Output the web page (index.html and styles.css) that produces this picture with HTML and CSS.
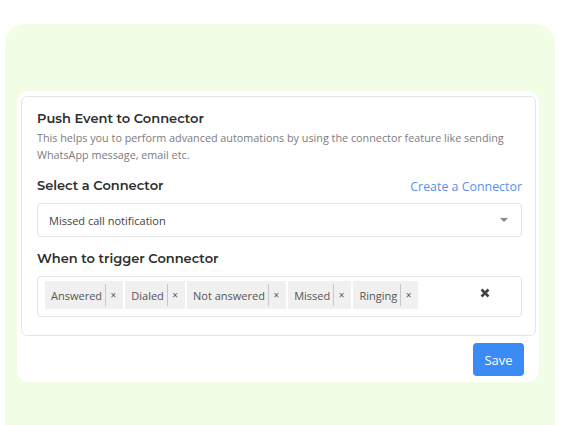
FILE: index.html
```html
<!DOCTYPE html>
<html>
<head>
<meta charset="utf-8">
<link rel="stylesheet" href="styles.css">
</head>
<body>
<div class="outer">
  <div class="card">
    <div class="box">
      <h3 class="title">Push Event to Connector</h3>
      <p class="desc">This helps you to perform advanced automations by using the connector feature like sending WhatsApp message, email etc.</p>
      <div class="label-row">
        <h4 class="label">Select a Connector</h4>
        <a class="link">Create a Connector</a>
      </div>
      <div class="select">
        <span class="select-text">Missed call notification</span>
        <span class="caret"></span>
      </div>
      <h4 class="label label-trigger">When to trigger Connector</h4>
      <div class="tagbox">
        <div class="tags">
          <span class="tag"><span class="tag-text">Answered</span><span class="tag-x">×</span></span>
          <span class="tag"><span class="tag-text">Dialed</span><span class="tag-x">×</span></span>
          <span class="tag"><span class="tag-text">Not answered</span><span class="tag-x">×</span></span>
          <span class="tag"><span class="tag-text">Missed</span><span class="tag-x">×</span></span>
          <span class="tag"><span class="tag-text">Ringing</span><span class="tag-x">×</span></span>
        </div>
        <svg class="clear" width="10" height="10" viewBox="0 0 10 10"><path d="M1.5 1.5 L8.5 8.5 M8.5 1.5 L1.5 8.5" stroke="#444" stroke-width="2.6" stroke-linecap="butt"/></svg>
      </div>
    </div>
    <div class="actions">
      <button class="save">Save</button>
    </div>
  </div>
</div>
</body>
</html>
```

FILE: styles.css
```css
html, body {
  margin: 0;
  padding: 0;
  background: #ffffff;
}
body {
  font-family: "Open Sans", "Liberation Sans", sans-serif;
  color: #333;
  overflow: hidden;
}
.outer {
  margin: 24px 0 0 5px;
  width: 538px;
  height: 334px;
  padding: 67px 0 0 12px;
  background: #f2fde6;
  border-radius: 20px 20px 0 0;
}
.card {
  width: 515px;
  height: 282px;
  padding: 5px 3px 4px 4px;
  background: #ffffff;
  border-radius: 12px;
}
.box {
  box-sizing: border-box;
  width: 515px;
  height: 240px;
  border: 1px solid #e2e5ea;
  border-radius: 6px;
  padding: 12px 13px 0 15px;
}
.title {
  margin: 0;
  font-family: "Montserrat", "Inter", "Open Sans", sans-serif;
  font-weight: 600;
  font-size: 13px;
  line-height: 18px;
  color: #2e2e2e;
}
.desc {
  margin: 2px 0 0 0;
  font-size: 10.8px;
  line-height: 17px;
  color: #7c7c7c;
}
.label-row {
  display: flex;
  justify-content: space-between;
  align-items: baseline;
  margin-top: 13px;
}
.label {
  margin: 0;
  font-family: "Montserrat", "Inter", "Open Sans", sans-serif;
  font-weight: 600;
  font-size: 13px;
  line-height: 18px;
  color: #2e2e2e;
}
.link {
  font-size: 12.4px;
  line-height: 18px;
  color: #5a8ff0;
  position: relative;
  top: 1px;
}
.select {
  box-sizing: border-box;
  margin-top: 8px;
  height: 34px;
  border: 1px solid #e4e4e4;
  border-radius: 4px;
  display: flex;
  align-items: center;
  justify-content: space-between;
  padding: 0 13px 0 11px;
}
.select-text {
  font-size: 11px;
  color: #444;
}
.caret {
  width: 0;
  height: 0;
  border-left: 4px solid transparent;
  border-right: 4px solid transparent;
  border-top: 4px solid #888;
}
.label-trigger {
  margin-top: 12px;
}
.tagbox {
  box-sizing: border-box;
  margin-top: 9px;
  height: 41px;
  border: 1px solid #e4e4e4;
  border-radius: 4px;
  padding: 4px 31px 0 7px;
  display: flex;
  justify-content: space-between;
  align-items: flex-start;
}
.tags {
  display: flex;
  gap: 2px;
}
.tag {
  display: flex;
  align-items: center;
  height: 28px;
  background: #f0f0f0;
  padding-left: 6px;
  font-size: 11px;
  color: #555;
}
.tag-text {
  padding-right: 3px;
}
.tag-x {
  border-left: 1px solid #c8c8c8;
  height: 22px;
  line-height: 22px;
  padding: 0 7px 0 4.5px;
  font-size: 10px;
  color: #555;
}
.clear {
  margin-top: 7px;
}
.actions {
  display: flex;
  justify-content: flex-end;
  padding: 7px 12px 0 0;
}
.save {
  width: 51px;
  height: 33px;
  border: none;
  border-radius: 4px;
  background: #3a8bf5;
  color: #fff;
  font-family: "Open Sans", sans-serif;
  font-size: 13px;
  padding: 0;
}
```
